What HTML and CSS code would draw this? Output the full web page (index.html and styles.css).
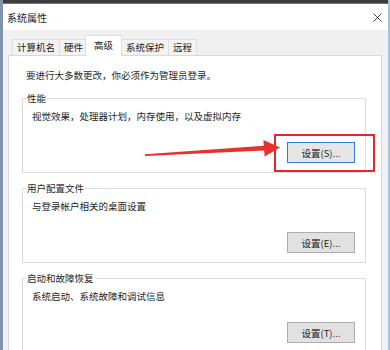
FILE: index.html
```html
<!DOCTYPE html>
<html lang="zh-CN">
<head>
  <meta charset="UTF-8" />
  <meta name="viewport" content="width=device-width, initial-scale=1.0"/>
  <title>系统属性</title>
  <link rel="stylesheet" href="styles.css">
</head>
<body>
  <div class="window">
    <div class="top-strip"></div>
    <div class="titlebar">
      <span class="title">系统属性</span>
      <svg class="close" width="9" height="9" viewBox="0 0 9 9">
        <path d="M0.5 0.5 L8.5 8.5 M8.5 0.5 L0.5 8.5" stroke="#444" stroke-width="1" fill="none"/>
      </svg>
    </div>

    <div class="dialog-body">
      <div class="tabs">
        <div class="tab">计算机名</div>
        <div class="tab">硬件</div>
        <div class="tab active">高级</div>
        <div class="tab">系统保护</div>
        <div class="tab">远程</div>
      </div>

      <div class="panel">
        <p class="note">要进行大多数更改，你必须作为管理员登录。</p>

        <fieldset class="group">
          <legend>性能</legend>
          <p class="desc">视觉效果，处理器计划，内存使用，以及虚拟内存</p>
          <div class="actions">
            <button class="btn focused">设置(S)...</button>
          </div>
        </fieldset>

        <fieldset class="group">
          <legend>用户配置文件</legend>
          <p class="desc">与登录帐户相关的桌面设置</p>
          <div class="actions">
            <button class="btn">设置(E)...</button>
          </div>
        </fieldset>

        <fieldset class="group">
          <legend>启动和故障恢复</legend>
          <p class="desc">系统启动、系统故障和调试信息</p>
          <div class="actions">
            <button class="btn">设置(T)...</button>
          </div>
        </fieldset>
      </div>
    </div>

    <!-- red annotation: box round the button + arrow -->
    <svg class="annotation" width="390" height="350" viewBox="0 0 390 350">
      <rect x="275" y="135" width="99" height="36" fill="none" stroke="#e3262b" stroke-width="2"/>
      <polygon points="145,154.3 263.8,145.8 263.4,140 280,147.6 264.6,156.5 264.2,150.4 145,155.9" fill="#e8302e"/>
    </svg>
  </div>
</body>
</html>
```

FILE: styles.css
```css
* {
  box-sizing: border-box;
}

body {
  margin: 0;
  width: 390px;
  height: 350px;
  overflow: hidden;
  font-family: "Noto Sans CJK SC", "Noto Sans", sans-serif;
  font-size: 9.5px;
  color: #1e1e1e;
  background: #f0f0f0;
}

.window {
  position: relative;
  width: 390px;
  height: 350px;
  display: flex;
  flex-direction: column;
  border-left: 3px solid #8093a8;
  border-right: 2px solid #a8c2dc;
  background: #f0f0f0;
}

.top-strip {
  height: 4px;
  background: #3c3c3c;
  border-bottom: 1px solid #5d7a99;
  flex-shrink: 0;
}

.titlebar {
  height: 26px;
  flex-shrink: 0;
  background: #fff;
  display: flex;
  align-items: center;
  justify-content: space-between;
  padding: 1px 6px 0 4px;
}

.title {
  font-size: 10px;
  line-height: 12px;
  color: #222;
}

.close {
  display: block;
}

.dialog-body {
  flex: 1;
  display: flex;
  flex-direction: column;
  padding: 0 6px 0 5px;
  min-height: 0;
}

/* tab strip */
.tabs {
  height: 25px;
  display: flex;
  align-items: flex-end;
  padding-left: 4px;
  flex-shrink: 0;
}

.tab {
  height: 16px;
  line-height: 14px;
  padding: 0 4px;
  border: 1px solid #dedede;
  border-bottom: none;
  margin-right: -1px;
  background: #f3f3f3;
  color: #222;
}

.tab.active {
  position: relative;
  z-index: 1;
  height: 21px;
  line-height: 19px;
  padding: 0 8px;
  margin: 0 -1px -1px -2px;
  background: #fff;
}

/* tab page */
.panel {
  flex: 1;
  background: #fff;
  border: 1px solid #d9d9d9;
  border-bottom: none;
  padding: 13px 15px 0 13px;
  min-height: 0;
}

.note {
  margin: 0 0 11px 4px;
  line-height: 12px;
}

.group {
  margin: 0;
  border: 1px solid #dcdcdc;
  padding: 6px 10px 9px 3px;
}

.group + .group {
  margin-top: 9px;
}

.group legend {
  padding: 0 1px;
  line-height: 12px;
  color: #1e1e1e;
}

.desc {
  margin: 0 0 20px 6px;
  line-height: 12px;
}

.actions {
  display: flex;
  justify-content: flex-end;
}

.btn {
  display: block;
  width: 68px;
  height: 21px;
  padding: 0;
  font-family: inherit;
  font-size: 9.5px;
  color: #1e1e1e;
  background: #e1e1e1;
  border: 1px solid #adadad;
}

.btn.focused {
  border-color: #2a7fd4;
  background: #e5e5e5;
}

.annotation {
  position: absolute;
  left: -3px;
  top: 0;
  pointer-events: none;
}
```
